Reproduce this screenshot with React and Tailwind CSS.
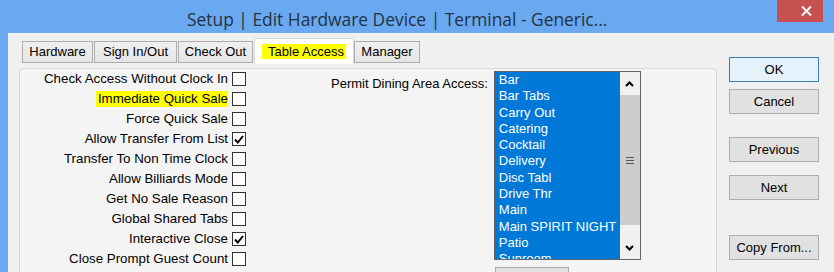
import React from 'react';

const FONT = "font-['Liberation_Sans',Arial,sans-serif]";

const options = [
  { label: 'Check Access Without Clock In', checked: false },
  { label: 'Immediate Quick Sale', checked: false, marked: true },
  { label: 'Force Quick Sale', checked: false },
  { label: 'Allow Transfer From List', checked: true },
  { label: 'Transfer To Non Time Clock', checked: false },
  { label: 'Allow Billiards Mode', checked: false },
  { label: 'Get No Sale Reason', checked: false },
  { label: 'Global Shared Tabs', checked: false },
  { label: 'Interactive Close', checked: true },
  { label: 'Close Prompt Guest Count', checked: false },
];

const areas = [
  'Bar', 'Bar Tabs', 'Carry Out', 'Catering', 'Cocktail', 'Delivery',
  'Disc Tabl', 'Drive Thr', 'Main', 'Main SPIRIT NIGHT', 'Patio', 'Sunroom',
];

const tabs = [
  { name: 'Hardware', w: 'w-[71px]', ml: 'ml-[3px]' },
  { name: 'Sign In/Out', w: 'w-[83px]', ml: 'ml-[1px]' },
  { name: 'Check Out', w: 'w-[75px]', ml: 'ml-[1px]' },
  { name: 'Table Access', w: 'w-[100px]', ml: 'ml-[1px]', active: true },
  { name: 'Manager', w: 'w-[66px]', ml: 'ml-0' },
];

function CheckBox({ checked }) {
  return (
    <div className="w-[14px] h-[14px] border border-[#333333] bg-white flex items-center justify-center shrink-0">
      {checked && (
        <svg width="10" height="9" viewBox="0 0 10 9">
          <polyline points="1,4.5 3.8,7.5 9,1" fill="none" stroke="#000" strokeWidth="2" />
        </svg>
      )}
    </div>
  );
}

function Chevron({ down }) {
  return (
    <svg width="9" height="6" viewBox="0 0 9 6">
      <polyline
        points={down ? '1,1 4.5,4.5 8,1' : '1,5 4.5,1.5 8,5'}
        fill="none"
        stroke="#000"
        strokeWidth="2"
      />
    </svg>
  );
}

function Btn({ children, primary, className = '' }) {
  return (
    <div
      className={`w-[90px] h-[25px] border flex items-center justify-center text-[13px] text-black ${
        primary ? 'border-[#3c7fb1] bg-[#e5f1fb]' : 'border-[#adadad] bg-[#e1e1e1]'
      } ${className}`}
    >
      {children}
    </div>
  );
}

export default function App() {
  return (
    <div className={`w-[834px] h-[272px] overflow-hidden bg-[#6aa9f0] flex flex-col ${FONT}`}>
      {/* Title bar */}
      <div className="h-[33px] flex items-start shrink-0">
        <div className="flex-1 pl-[187px] pt-[7px] leading-[24px] text-[17.4px] text-[#223344] font-['Open_Sans',sans-serif] whitespace-nowrap">
          Setup | Edit Hardware Device | Terminal - Generic...
        </div>
        <div className="w-[46px] h-[22px] mr-[11px] bg-[#c75050] flex items-center justify-center pl-[12px]">
          <svg width="11" height="10" viewBox="0 0 11 10">
            <path d="M1 0.5 L10 9.5 M10 0.5 L1 9.5" stroke="#fff" strokeWidth="2" />
          </svg>
        </div>
      </div>

      {/* Body */}
      <div className="flex-1 flex pl-[8px]">
        <div className="flex-1 bg-[#f0f0f0] flex items-start">
          {/* Tabs and panel */}
          <div className="pl-[11px] flex flex-col">
            <div className="mt-[5px] h-[26px] flex items-start">
              {tabs.map((t) =>
                t.active ? (
                  <div
                    key={t.name}
                    className={`${t.w} ${t.ml} h-[26px] bg-white border border-b-0 border-[#d9d9d9] flex items-center justify-center text-[13px] text-black`}
                  >
                    <span className="bg-[#ffff00] pl-[6px] pr-[2px] leading-[15px]">{t.name}</span>
                  </div>
                ) : (
                  <div
                    key={t.name}
                    className={`${t.w} ${t.ml} mt-[3px] h-[22px] bg-gradient-to-b from-[#f0f0f0] to-[#e5e5e5] border border-[#acacac] flex items-center justify-center text-[13px] text-black`}
                  >
                    {t.name}
                  </div>
                )
              )}
            </div>

            <div className="mt-[4px] w-[698px] h-[230px] border border-[#d9d9d9] rounded-t-[4px] bg-[#f4f4f4] flex items-start">
              {/* Checkbox column */}
              <div className="w-[226px] flex flex-col">
                {options.map((o) => (
                  <div key={o.label} className="h-[20px] flex items-center justify-end gap-[4px]">
                    <span
                      className={`text-[13.3px] leading-[16px] text-black whitespace-nowrap ${
                        o.marked ? 'bg-[#ffff00] pl-[2px]' : ''
                      }`}
                    >
                      {o.label}
                    </span>
                    <CheckBox checked={o.checked} />
                  </div>
                ))}
              </div>

              {/* Dining area access */}
              <div className="ml-[85px] mt-[7px] text-[13px] leading-[16px] text-black whitespace-nowrap">
                Permit Dining Area Access:
              </div>
              <div className="ml-[6px] mt-[2px] flex flex-col">
                <div className="w-[147px] h-[189px] border border-[#646464] flex bg-[#0078d7]">
                  <div className="flex-1 overflow-hidden">
                    {areas.map((a) => (
                      <div key={a} className="h-[16.3px] leading-[16.3px] pl-[4px] text-[13px] text-white whitespace-nowrap">
                        {a}
                      </div>
                    ))}
                  </div>
                  <div className="w-[20px] flex flex-col bg-[#f0f0f0]">
                    <div className="h-[23px] flex items-center justify-center">
                      <Chevron />
                    </div>
                    <div className="h-[130px] bg-[#cdcdcd] flex flex-col items-center justify-center gap-[2px]">
                      <div className="w-[8px] h-[1px] bg-[#555]" />
                      <div className="w-[8px] h-[1px] bg-[#555]" />
                      <div className="w-[8px] h-[1px] bg-[#555]" />
                    </div>
                    <div className="h-[12px]" />
                    <div className="h-[22px] flex items-center justify-center">
                      <Chevron down />
                    </div>
                  </div>
                </div>
                <div className="ml-[1px] mt-[7px] w-[74px] h-[24px] border border-[#adadad] bg-[#e1e1e1]" />
              </div>
            </div>
          </div>

          {/* Right buttons */}
          <div className="ml-[12px] mt-[24px] flex flex-col">
            <Btn primary>OK</Btn>
            <Btn className="mt-[7px]">Cancel</Btn>
            <Btn className="mt-[23px]">Previous</Btn>
            <Btn className="mt-[13px]">Next</Btn>
            <Btn className="mt-[35px]">Copy From...</Btn>
          </div>
        </div>
      </div>
    </div>
  );
}
